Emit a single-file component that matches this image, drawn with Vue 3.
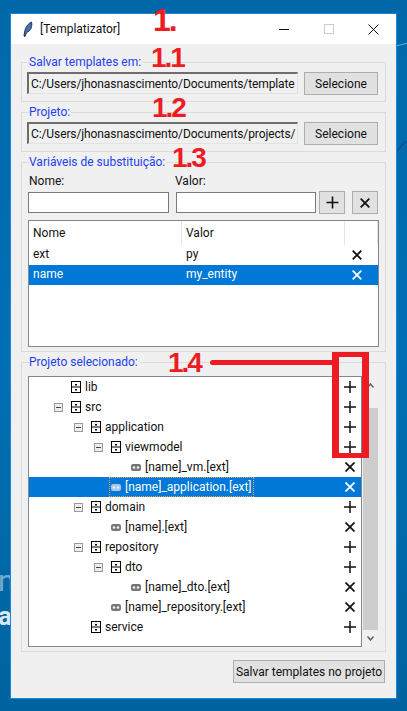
<template>
  <div class="desktop">
    <span class="wall-letter faint">n</span>
    <span class="wall-letter bright">a</span>
    <svg class="streaks" width="12" height="160" viewBox="0 0 12 160">
      <path d="M0 46 L12 43" stroke="#5cb0e0" stroke-width="1.2" />
      <path d="M0 152 L10 141" stroke="#124f8c" stroke-width="1.6" />
    </svg>

    <div class="window">
      <div class="titlebar">
        <svg class="feather" width="10" height="16" viewBox="0 0 10 16">
          <path d="M1 15 C1.5 10 2.5 4 8.5 1 C9.5 5 8 10 3.5 11.5 L2 15.5 Z" fill="#3f72b8" stroke="#1c2430" stroke-width="0.9" />
        </svg>
        <span class="title">[Templatizator]</span>
        <div class="controls">
          <span class="ctl"><span class="min-line"></span></span>
          <span class="ctl"><span class="max-box"></span></span>
          <span class="ctl">
            <svg width="11" height="11" viewBox="0 0 11 11"><path d="M0.5 0.5 L10.5 10.5 M10.5 0.5 L0.5 10.5" stroke="#111" stroke-width="1" /></svg>
          </span>
        </div>
      </div>

      <div class="content">
        <div class="group">
          <span class="legend">Salvar templates em:</span>
          <div class="path-row">
            <div class="path-entry">C:/Users/jhonasnascimento/Documents/template</div>
            <button class="btn select-btn">Selecione</button>
          </div>
        </div>

        <div class="group">
          <span class="legend">Projeto:</span>
          <div class="path-row">
            <div class="path-entry">C:/Users/jhonasnascimento/Documents/projects/</div>
            <button class="btn select-btn">Selecione</button>
          </div>
        </div>

        <div class="group vars">
          <span class="legend">Variáveis de substituição:</span>
          <div class="var-labels">
            <span>Nome:</span>
            <span>Valor:</span>
          </div>
          <div class="var-inputs">
            <div class="entry name-entry"></div>
            <div class="entry value-entry"></div>
            <button class="btn icon-btn add-btn">
              <svg width="13" height="13" viewBox="0 0 13 13"><path d="M6.5 0.5 V12.5 M0.5 6.5 H12.5" stroke="#111" stroke-width="1.6" /></svg>
            </button>
            <button class="btn icon-btn">
              <svg width="10" height="10" viewBox="0 0 10 10"><path d="M0.7 0.7 L9.3 9.3 M9.3 0.7 L0.7 9.3" stroke="#111" stroke-width="1.8" /></svg>
            </button>
          </div>
          <div class="table">
            <div class="thead">
              <span class="th">Nome</span>
              <span class="th">Valor</span>
              <span class="th"></span>
            </div>
            <div
              class="tr"
              :class="{ selected: v.selected }"
              v-for="v of variables"
              :key="v.name"
            >
              <span class="td">{{ v.name }}</span>
              <span class="td">{{ v.value }}</span>
              <span class="td del">
                <svg width="10" height="10" viewBox="0 0 10 10"><path d="M0.7 0.7 L9.3 9.3 M9.3 0.7 L0.7 9.3" stroke="currentColor" stroke-width="1.8" /></svg>
              </span>
            </div>
          </div>
        </div>

        <div class="group project">
          <span class="legend">Projeto selecionado:</span>
          <div class="tree-wrap">
            <div class="tree">
              <div
                class="node"
                :class="{ selected: n.selected }"
                v-for="(n, index) of nodes"
                :key="index"
              >
                <span class="indent" :style="{ width: 25 + n.depth * 20 + 'px' }"></span>
                <span class="expander">
                  <span class="minus" v-if="n.open"></span>
                </span>
                <span class="node-label" :class="{ focused: n.selected }">
                  <svg v-if="n.folder" class="ico" width="10" height="12" viewBox="0 0 10 12">
                    <rect x="0.5" y="0.5" width="9" height="11" fill="#fff" stroke="#000" />
                    <path d="M0 6 H10" stroke="#000" />
                    <rect x="4" y="3" width="2" height="1.5" fill="#000" />
                    <rect x="4" y="8" width="2" height="1.5" fill="#000" />
                  </svg>
                  <svg v-else class="ico" width="10" height="7" viewBox="0 0 10 7">
                    <rect x="0" y="0" width="10" height="7" rx="2" :fill="n.selected ? '#a9c6e6' : '#777'" />
                    <circle cx="3" cy="3.5" r="1.3" fill="#eee" />
                    <circle cx="7" cy="3.5" r="1.3" fill="#eee" />
                  </svg>
                  <span>{{ n.name }}</span>
                </span>
                <span class="node-action">
                  <svg v-if="n.folder" width="12" height="12" viewBox="0 0 12 12"><path d="M6 0 V12 M0 6 H12" stroke="currentColor" stroke-width="1.5" /></svg>
                  <svg v-else width="10" height="10" viewBox="0 0 10 10"><path d="M0.5 0.5 L9.5 9.5 M9.5 0.5 L0.5 9.5" stroke="currentColor" stroke-width="1.7" /></svg>
                </span>
              </div>
            </div>
            <div class="scrollbar">
              <div class="arrow up">
                <svg width="7" height="5" viewBox="0 0 7 5"><path d="M0.5 4.5 L3.5 1 L6.5 4.5" fill="none" stroke="#606060" stroke-width="1.5" /></svg>
              </div>
              <div class="thumb"></div>
              <div class="arrow down">
                <svg width="7" height="5" viewBox="0 0 7 5"><path d="M0.5 0.5 L3.5 4 L6.5 0.5" fill="none" stroke="#606060" stroke-width="1.5" /></svg>
              </div>
            </div>
          </div>
        </div>

        <div class="footer">
          <button class="btn save-btn">Salvar templates no projeto</button>
        </div>
      </div>
    </div>

    <span class="mark m1">1.</span>
    <span class="mark m11">1.1</span>
    <span class="mark m12">1.2</span>
    <span class="mark m13">1.3</span>
    <span class="mark m14">1.4</span>
    <div class="mark-line"></div>
    <div class="mark-box"></div>
  </div>
</template>

<script setup>
const variables = [
  { name: 'ext', value: 'py' },
  { name: 'name', value: 'my_entity', selected: true }
]

const nodes = [
  { name: 'lib', depth: 0, folder: true },
  { name: 'src', depth: 0, folder: true, open: true },
  { name: 'application', depth: 1, folder: true, open: true },
  { name: 'viewmodel', depth: 2, folder: true, open: true },
  { name: '[name]_vm.[ext]', depth: 3 },
  { name: '[name]_application.[ext]', depth: 2, selected: true },
  { name: 'domain', depth: 1, folder: true, open: true },
  { name: '[name].[ext]', depth: 2 },
  { name: 'repository', depth: 1, folder: true, open: true },
  { name: 'dto', depth: 2, folder: true, open: true },
  { name: '[name]_dto.[ext]', depth: 3 },
  { name: '[name]_repository.[ext]', depth: 2 },
  { name: 'service', depth: 1, folder: true }
]
</script>

<style>
html, body {
  margin: 0;
  background: #006aaa;
}
</style>

<style scoped>
.desktop {
  position: relative;
  width: 407px;
  height: 711px;
  overflow: hidden;
  padding: 13px 0 0 10px;
  box-sizing: border-box;
  background: linear-gradient(180deg, #0068a9 0%, #0070b4 50%, #00639f 100%);
  font-family: Roboto, "Noto Sans", sans-serif;
  font-size: 12px;
  color: #111;
}
.wall-letter {
  position: absolute;
  left: -2px;
  color: #fff;
  font-size: 26px;
  line-height: 26px;
}
.wall-letter.faint {
  top: 566px;
  font-size: 30px;
  line-height: 30px;
  opacity: 0.45;
}
.wall-letter.bright {
  top: 603px;
  font-weight: 700;
  opacity: 0.85;
}
.streaks {
  position: absolute;
  left: 396px;
  top: 0;
}
.window {
  position: relative;
  width: 387px;
  height: 686px;
  box-sizing: border-box;
  border: 1px solid #1786dc;
  background: #f0f0f0;
}
.titlebar {
  display: flex;
  align-items: center;
  height: 30px;
  padding-left: 12px;
  background: #fff;
}
.title {
  margin-left: 7px;
}
.controls {
  display: flex;
  margin-left: auto;
}
.ctl {
  display: flex;
  align-items: center;
  justify-content: center;
  width: 45px;
  height: 30px;
}
.min-line {
  width: 10px;
  height: 1px;
  background: #111;
}
.max-box {
  width: 8px;
  height: 8px;
  border: 1px solid #ccc;
}
.content {
  padding: 18px 10px 0;
}
.group {
  position: relative;
  margin-bottom: 10px;
  padding: 9px 7px 6px 5px;
  border: 1px solid #dcdcdc;
}
.legend {
  position: absolute;
  top: -10px;
  left: 7px;
  padding-right: 1px;
  line-height: 18px;
  background: #f0f0f0;
  color: #2340f0;
}
.path-row {
  display: flex;
  gap: 6px;
}
.path-entry {
  flex: 1;
  min-width: 0;
  height: 22px;
  padding-left: 2px;
  box-sizing: border-box;
  white-space: nowrap;
  letter-spacing: -0.1px;
  line-height: 21px;
  background: #f0f0f0;
  border: 1px solid #e3e3e3;
  border-top: 2px solid #6d6d6d;
  border-left: 2px solid #6d6d6d;
}
.btn {
  padding: 0;
  box-sizing: border-box;
  border: 1px solid #adadad;
  background: #e1e1e1;
  color: #111;
  font: inherit;
  white-space: nowrap;
}
.select-btn {
  flex: none;
  width: 74px;
  height: 23px;
}
.vars {
  padding-bottom: 4px;
}
.var-labels {
  display: flex;
  height: 19px;
  line-height: 18px;
  padding-left: 2px;
}
.var-labels span:first-child {
  width: 146px;
}
.var-inputs {
  display: flex;
  align-items: center;
}
.entry {
  height: 21px;
  box-sizing: border-box;
  background: #fff;
  border: 1px solid #7a7a7a;
}
.name-entry {
  width: 141px;
  margin-left: 1px;
}
.value-entry {
  width: 140px;
  margin-left: 7px;
}
.icon-btn {
  display: flex;
  align-items: center;
  justify-content: center;
  width: 26px;
  height: 23px;
}
.add-btn {
  margin: 0 7px 0 3px;
}
.table {
  height: 127px;
  margin: 6px -1px 0 1px;
  box-sizing: border-box;
  border: 1px solid #828790;
  background: #fff;
}
.thead, .tr {
  display: grid;
  grid-template-columns: 153px 163px 1fr;
}
.thead {
  height: 24px;
}
.th {
  padding-left: 4px;
  line-height: 24px;
  border-right: 1px solid #e5e5e5;
}
.tr {
  height: 20px;
  line-height: 19px;
}
.td {
  padding-left: 4px;
}
.td.del {
  display: flex;
  align-items: center;
  padding-left: 7px;
}
.selected {
  background: #0078d7;
  color: #fff;
}
.project {
  padding: 13px 7px 4px 6px;
  margin-bottom: 8px;
}
.tree-wrap {
  display: flex;
  height: 271px;
}
.tree {
  width: 334px;
  box-sizing: border-box;
  border: 1px solid #828790;
  background: #fff;
}
.node {
  display: flex;
  align-items: center;
  height: 20px;
}
.indent {
  flex: none;
}
.expander {
  display: flex;
  flex: none;
  align-items: center;
  width: 15px;
}
.minus {
  position: relative;
  width: 9px;
  height: 9px;
  box-sizing: border-box;
  border: 1px solid #999;
  background: #eee;
}
.minus::after {
  content: "";
  position: absolute;
  left: 1px;
  right: 1px;
  top: 3px;
  height: 1px;
  background: #444;
}
.node-label {
  display: flex;
  align-items: center;
  height: 18px;
  padding: 0 1px;
  white-space: nowrap;
  border: 1px solid transparent;
}
.node-label.focused {
  border: 1px dotted #e8a860;
}
.ico {
  flex: none;
  margin-right: 4px;
}
.node-action {
  display: flex;
  align-items: center;
  justify-content: center;
  width: 12px;
  margin-left: auto;
  margin-right: 5px;
}
.scrollbar {
  display: flex;
  flex-direction: column;
  width: 16px;
  padding-left: 1px;
  box-sizing: border-box;
}
.arrow {
  display: flex;
  align-items: center;
  justify-content: center;
}
.arrow.up {
  height: 32px;
  padding-bottom: 14px;
  box-sizing: border-box;
}
.arrow.down {
  height: 17px;
}
.thumb {
  flex: 1;
  background: #cdcdcd;
}
.footer {
  display: flex;
  justify-content: flex-end;
  margin-right: 1px;
}
.save-btn {
  width: 152px;
  height: 23px;
}
.mark {
  position: absolute;
  color: #ed1c24;
  font-family: "Liberation Sans", Arial, sans-serif;
  font-weight: 700;
  font-size: 28px;
  line-height: 28px;
  letter-spacing: -2px;
}
.m1 { left: 153px; top: 4px; font-size: 32px; line-height: 32px; }
.m11 { left: 151px; top: 44px; }
.m12 { left: 152px; top: 94px; }
.m13 { left: 172px; top: 144px; }
.m14 { left: 168px; top: 349px; }
.mark-line {
  position: absolute;
  left: 210px;
  top: 360px;
  width: 124px;
  height: 5px;
  border-radius: 3px 0 0 3px;
  background: #ed1c24;
}
.mark-box {
  position: absolute;
  left: 332px;
  top: 352px;
  width: 37px;
  height: 106px;
  box-sizing: border-box;
  border: 5px solid #ed1c24;
  border-left-width: 7px;
  border-right-width: 7px;
}
</style>
